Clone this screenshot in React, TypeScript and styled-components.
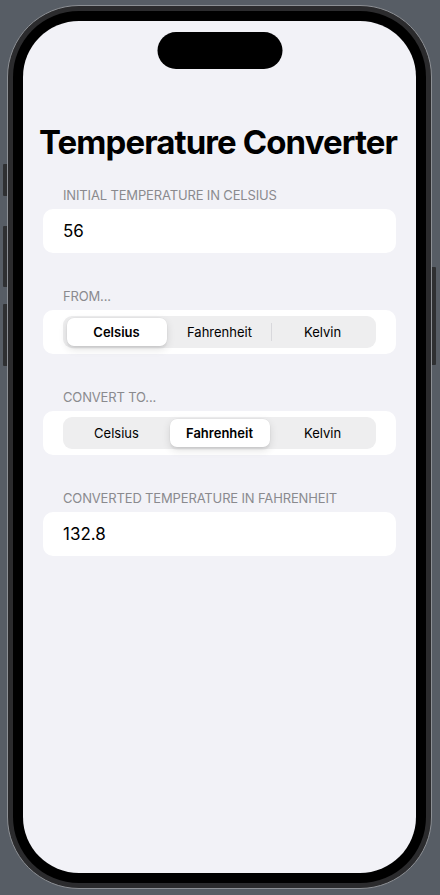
import React from "react";
import styled, { createGlobalStyle } from "styled-components";

const Global = createGlobalStyle`
  html, body { margin: 0; padding: 0; background: #575d65; }
  body { font-family: Inter, "Noto Sans", "Liberation Sans", sans-serif; -webkit-font-smoothing: antialiased; }
  * { box-sizing: border-box; }
`;

const Stage = styled.div`
  width: 440px;
  height: 895px;
  padding: 5px 0 0 7px;
  position: relative;
  overflow: hidden;
`;

const PhoneOuter = styled.div`
  position: relative;
  width: 425px;
  height: 884px;
  border: 1px solid #8c8f94;
  border-radius: 72px;
  background: #2b2b2d;
  padding: 5px;
`;

const PhoneBezel = styled.div`
  width: 100%;
  height: 100%;
  border-radius: 66px;
  background: #000;
  padding: 10px;
`;

const Screen = styled.div`
  position: relative;
  width: 100%;
  height: 100%;
  border-radius: 56px;
  background: #f2f2f7;
  overflow: hidden;
  padding: 101px 20px 0;
  display: flex;
  flex-direction: column;
`;

const Island = styled.div`
  position: absolute;
  top: 11px;
  left: 50%;
  transform: translateX(-50%);
  width: 125px;
  height: 37px;
  border-radius: 19px;
  background: #000;
`;

const SideButton = styled.div<{ $side: "left" | "right"; $top: number; $h: number }>`
  position: absolute;
  ${(p) => (p.$side === "left" ? "left: 3px;" : "left: 432px;")}
  top: ${(p) => p.$top}px;
  width: ${(p) => (p.$side === "left" ? 5 : 4)}px;
  height: ${(p) => p.$h}px;
  background: #2f3032;
  border-radius: ${(p) => (p.$side === "left" ? "1px 0 0 1px" : "0 1px 1px 0")};
`;

const Title = styled.h1`
  margin: 0 -20px 24px -4px;
  font-size: 33px;
  line-height: 41px;
  font-weight: 700;
  letter-spacing: -0.9px;
  white-space: nowrap;
  color: #000;
`;

const Section = styled.section`
  display: flex;
  flex-direction: column;
  margin-bottom: 35px;
`;

const Header = styled.div`
  margin: 0 0 6px 20px;
  font-size: 13px;
  line-height: 16px;
  color: #8a8a8e;
  text-transform: uppercase;
  letter-spacing: -0.15px;
`;

const Card = styled.div`
  background: #fff;
  border-radius: 10px;
  min-height: 44px;
  padding: 6px 20px;
  display: flex;
  align-items: center;
`;

const Value = styled.span`
  font-size: 17px;
  line-height: 22px;
  color: #000;
`;

const Segmented = styled.div`
  position: relative;
  width: 100%;
  height: 32px;
  padding: 2px;
  border-radius: 9px;
  background: #eeeeef;
  display: grid;
  grid-template-columns: repeat(3, 1fr);
`;

const Segment = styled.div<{ $selected: boolean; $divider: boolean }>`
  position: relative;
  display: flex;
  align-items: center;
  justify-content: center;
  margin: 0 1.5px;
  border-radius: 7px;
  font-size: 13px;
  font-weight: ${(p) => (p.$selected ? 600 : 400)};
  color: #000;
  background: ${(p) => (p.$selected ? "#fff" : "transparent")};
  box-shadow: ${(p) =>
    p.$selected
      ? "0 3px 8px rgba(0,0,0,0.12), 0 3px 1px rgba(0,0,0,0.04), 0 0 0 0.5px rgba(0,0,0,0.04)"
      : "none"};
  &::before {
    content: "";
    display: ${(p) => (p.$divider ? "block" : "none")};
    position: absolute;
    left: -2px;
    top: 5px;
    width: 1px;
    height: 18px;
    background: #d8d8dc;
  }
`;

const options = ["Celsius", "Fahrenheit", "Kelvin"];

function Picker({ selected }: { selected: number }) {
  return (
    <Segmented>
      {options.map((o, i) => (
        <Segment
          key={o}
          $selected={i === selected}
          $divider={i > 0 && i !== selected && i - 1 !== selected}
        >
          {o}
        </Segment>
      ))}
    </Segmented>
  );
}

export default function App() {
  return (
    <>
      <Global />
      <Stage>
        <SideButton $side="left" $top={164} $h={32} />
        <SideButton $side="left" $top={226} $h={61} />
        <SideButton $side="left" $top={304} $h={62} />
        <SideButton $side="right" $top={267} $h={98} />
        <PhoneOuter>
          <PhoneBezel>
            <Screen>
              <Island />
              <Title>Temperature Converter</Title>
              <Section>
                <Header>Initial temperature in Celsius</Header>
                <Card>
                  <Value>56</Value>
                </Card>
              </Section>
              <Section>
                <Header>From...</Header>
                <Card>
                  <Picker selected={0} />
                </Card>
              </Section>
              <Section>
                <Header>Convert to...</Header>
                <Card>
                  <Picker selected={1} />
                </Card>
              </Section>
              <Section>
                <Header>Converted temperature in Fahrenheit</Header>
                <Card>
                  <Value>132.8</Value>
                </Card>
              </Section>
            </Screen>
          </PhoneBezel>
        </PhoneOuter>
      </Stage>
    </>
  );
}
